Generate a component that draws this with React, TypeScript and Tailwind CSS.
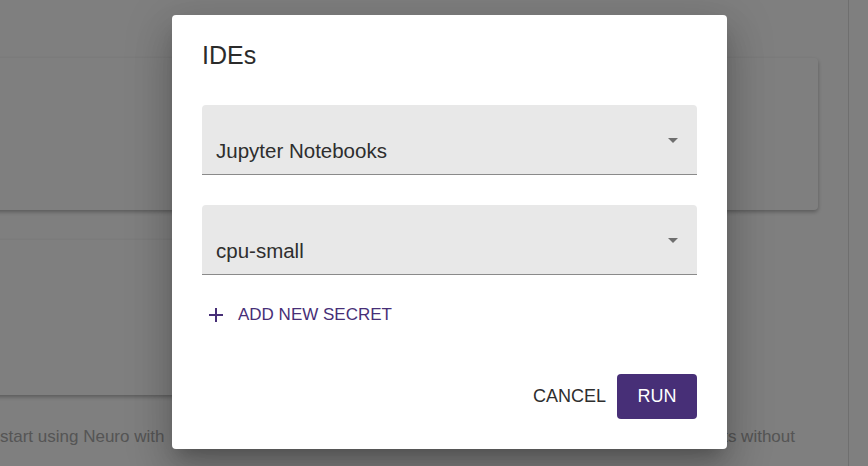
import React from "react";

const font = { fontFamily: '"Liberation Sans", Arial, sans-serif' };

function SelectField({ value }: { value: string }) {
  return (
    <div className="relative h-[70px] rounded-t-[4px] border-b border-[#8a8a8a] bg-[#e8e8e8]">
      <div className="absolute bottom-[11px] left-[14px] text-[20.5px] leading-[24px] text-[#2e2e2e]">
        {value}
      </div>
      <svg
        viewBox="0 0 24 24"
        className="absolute right-[12px] top-[23px] h-6 w-6 fill-[#6e6e6e]"
      >
        <path d="M7 10l5 5 5-5z" />
      </svg>
    </div>
  );
}

export default function App() {
  return (
    <div
      className="relative h-[466px] w-[868px] overflow-hidden bg-white"
      style={font}
    >
      {/* page underneath */}
      <div className="flex h-full">
        <main className="-ml-[12px] flex flex-1 flex-col pt-[58px] pr-[30px]">
          <div className="h-[152px] rounded-[4px] bg-white shadow-[0_2px_4px_rgba(0,0,0,0.3)]" />
          <div className="mt-[30px] h-[155px] w-[480px] rounded-[4px] bg-white shadow-[0_2px_4px_rgba(0,0,0,0.3)]" />
          <div className="mt-[32px] flex w-[807px] justify-between text-[17px] leading-[20px] text-[#aaaaaa]">
            <span className="ml-[12px]">start using Neuro with</span>
            <span>pre-configured IDEs and its without</span>
          </div>
        </main>
        <aside className="w-[20px] border-l border-[#dedede]" />
      </div>

      {/* overlay + dialog */}
      <div className="absolute inset-0 bg-black/50">
        <div className="absolute left-[172px] top-[15px] flex h-[434px] w-[555px] flex-col rounded-[4px] bg-white px-[30px] pb-[30px] shadow-[0_11px_15px_-7px_rgba(0,0,0,0.2),0_24px_38px_3px_rgba(0,0,0,0.14),0_9px_46px_8px_rgba(0,0,0,0.12)]">
          <h2 className="pt-[26px] text-[25px] leading-[28px] text-[#2b2b2b]">
            IDEs
          </h2>
          <div className="mt-[36px] flex flex-col gap-[30px]">
            <SelectField value="Jupyter Notebooks" />
            <SelectField value="cpu-small" />
          </div>
          <button className="mt-[28px] flex items-center gap-[10px] self-start pl-[2px] text-[17px] leading-[22px] text-[#472f77]">
            <svg viewBox="0 0 24 24" className="h-6 w-6 fill-[#472f77]">
              <path d="M19 13h-6v6h-2v-6H5v-2h6V5h2v6h6v2z" />
            </svg>
            ADD NEW SECRET
          </button>
          <div className="mt-auto flex items-center justify-end gap-[11px]">
            <button className="text-[18px] text-[#2e2e2e]">CANCEL</button>
            <button className="h-[45px] w-[80px] rounded-[4px] bg-[#472f77] text-[18px] text-white">
              RUN
            </button>
          </div>
        </div>
      </div>
    </div>
  );
}
